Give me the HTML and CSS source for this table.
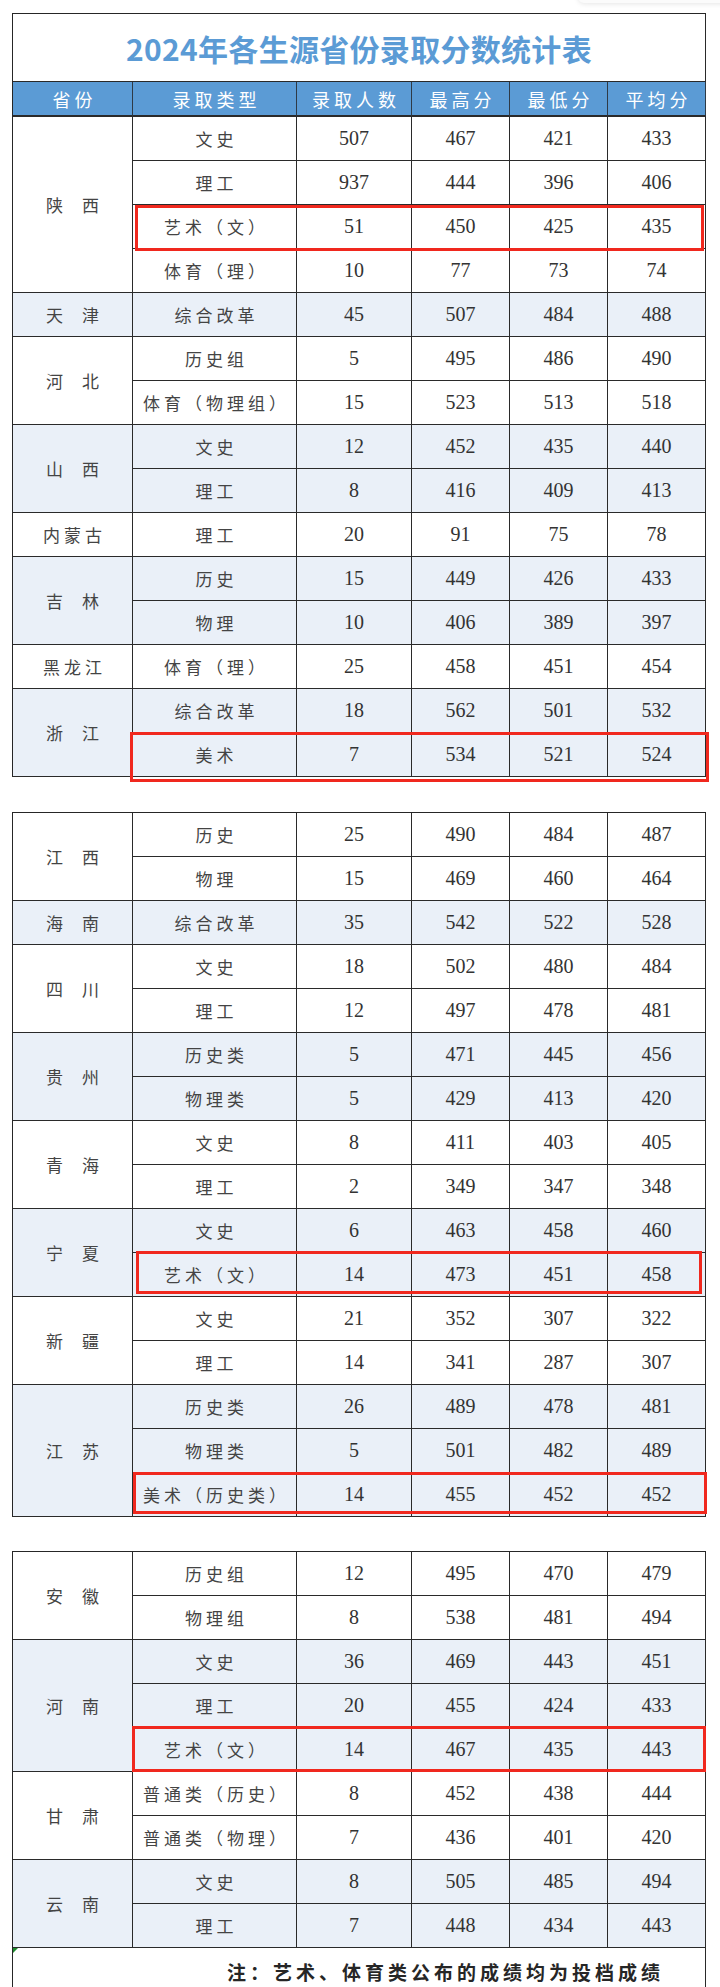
FILE: index.html
```html
<!DOCTYPE html>
<html lang="zh-CN">
<head>
<meta charset="utf-8">
<title>2024年各生源省份录取分数统计表</title>
<link rel="stylesheet" href="styles.css">
</head>
<body>
<div class="shade"></div>
<div class="page">
  <div class="sheet sheet-one">
    <div class="c title">2024年各生源省份录取分数统计表</div>
    <div class="c h">省份</div><div class="c h">录取类型</div><div class="c h">录取人数</div><div class="c h">最高分</div><div class="c h">最低分</div><div class="c h">平均分</div>

    <div class="c p s4">陕西</div>
    <div class="c t">文史</div><div class="c n">507</div><div class="c n">467</div><div class="c n">421</div><div class="c n">433</div>
    <div class="c t">理工</div><div class="c n">937</div><div class="c n">444</div><div class="c n">396</div><div class="c n">406</div>
    <div class="c t">艺术（文）</div><div class="c n">51</div><div class="c n">450</div><div class="c n">425</div><div class="c n">435</div>
    <div class="c t">体育（理）</div><div class="c n">10</div><div class="c n">77</div><div class="c n">73</div><div class="c n">74</div>

    <div class="c p b">天津</div>
    <div class="c t b">综合改革</div><div class="c n b">45</div><div class="c n b">507</div><div class="c n b">484</div><div class="c n b">488</div>

    <div class="c p s2">河北</div>
    <div class="c t">历史组</div><div class="c n">5</div><div class="c n">495</div><div class="c n">486</div><div class="c n">490</div>
    <div class="c t">体育（物理组）</div><div class="c n">15</div><div class="c n">523</div><div class="c n">513</div><div class="c n">518</div>

    <div class="c p s2 b">山西</div>
    <div class="c t b">文史</div><div class="c n b">12</div><div class="c n b">452</div><div class="c n b">435</div><div class="c n b">440</div>
    <div class="c t b">理工</div><div class="c n b">8</div><div class="c n b">416</div><div class="c n b">409</div><div class="c n b">413</div>

    <div class="c p3">内蒙古</div>
    <div class="c t">理工</div><div class="c n">20</div><div class="c n">91</div><div class="c n">75</div><div class="c n">78</div>

    <div class="c p s2 b">吉林</div>
    <div class="c t b">历史</div><div class="c n b">15</div><div class="c n b">449</div><div class="c n b">426</div><div class="c n b">433</div>
    <div class="c t b">物理</div><div class="c n b">10</div><div class="c n b">406</div><div class="c n b">389</div><div class="c n b">397</div>

    <div class="c p3">黑龙江</div>
    <div class="c t">体育（理）</div><div class="c n">25</div><div class="c n">458</div><div class="c n">451</div><div class="c n">454</div>

    <div class="c p s2 b">浙江</div>
    <div class="c t b">综合改革</div><div class="c n b">18</div><div class="c n b">562</div><div class="c n b">501</div><div class="c n b">532</div>
    <div class="c t b">美术</div><div class="c n b">7</div><div class="c n b">534</div><div class="c n b">521</div><div class="c n b">524</div>

    <div class="mark mark-1"></div>
    <div class="mark mark-2"></div>
  </div>

  <div class="sheet sheet-two">
    <div class="c p s2">江西</div>
    <div class="c t">历史</div><div class="c n">25</div><div class="c n">490</div><div class="c n">484</div><div class="c n">487</div>
    <div class="c t">物理</div><div class="c n">15</div><div class="c n">469</div><div class="c n">460</div><div class="c n">464</div>

    <div class="c p b">海南</div>
    <div class="c t b">综合改革</div><div class="c n b">35</div><div class="c n b">542</div><div class="c n b">522</div><div class="c n b">528</div>

    <div class="c p s2">四川</div>
    <div class="c t">文史</div><div class="c n">18</div><div class="c n">502</div><div class="c n">480</div><div class="c n">484</div>
    <div class="c t">理工</div><div class="c n">12</div><div class="c n">497</div><div class="c n">478</div><div class="c n">481</div>

    <div class="c p s2 b">贵州</div>
    <div class="c t b">历史类</div><div class="c n b">5</div><div class="c n b">471</div><div class="c n b">445</div><div class="c n b">456</div>
    <div class="c t b">物理类</div><div class="c n b">5</div><div class="c n b">429</div><div class="c n b">413</div><div class="c n b">420</div>

    <div class="c p s2">青海</div>
    <div class="c t">文史</div><div class="c n">8</div><div class="c n">411</div><div class="c n">403</div><div class="c n">405</div>
    <div class="c t">理工</div><div class="c n">2</div><div class="c n">349</div><div class="c n">347</div><div class="c n">348</div>

    <div class="c p s2 b">宁夏</div>
    <div class="c t b">文史</div><div class="c n b">6</div><div class="c n b">463</div><div class="c n b">458</div><div class="c n b">460</div>
    <div class="c t b">艺术（文）</div><div class="c n b">14</div><div class="c n b">473</div><div class="c n b">451</div><div class="c n b">458</div>

    <div class="c p s2">新疆</div>
    <div class="c t">文史</div><div class="c n">21</div><div class="c n">352</div><div class="c n">307</div><div class="c n">322</div>
    <div class="c t">理工</div><div class="c n">14</div><div class="c n">341</div><div class="c n">287</div><div class="c n">307</div>

    <div class="c p s3 b">江苏</div>
    <div class="c t b">历史类</div><div class="c n b">26</div><div class="c n b">489</div><div class="c n b">478</div><div class="c n b">481</div>
    <div class="c t b">物理类</div><div class="c n b">5</div><div class="c n b">501</div><div class="c n b">482</div><div class="c n b">489</div>
    <div class="c t b">美术（历史类）</div><div class="c n b">14</div><div class="c n b">455</div><div class="c n b">452</div><div class="c n b">452</div>

    <div class="mark mark-3"></div>
    <div class="mark mark-4"></div>
  </div>

  <div class="sheet sheet-three">
    <div class="c p s2">安徽</div>
    <div class="c t">历史组</div><div class="c n">12</div><div class="c n">495</div><div class="c n">470</div><div class="c n">479</div>
    <div class="c t">物理组</div><div class="c n">8</div><div class="c n">538</div><div class="c n">481</div><div class="c n">494</div>

    <div class="c p s3 b">河南</div>
    <div class="c t b">文史</div><div class="c n b">36</div><div class="c n b">469</div><div class="c n b">443</div><div class="c n b">451</div>
    <div class="c t b">理工</div><div class="c n b">20</div><div class="c n b">455</div><div class="c n b">424</div><div class="c n b">433</div>
    <div class="c t b">艺术（文）</div><div class="c n b">14</div><div class="c n b">467</div><div class="c n b">435</div><div class="c n b">443</div>

    <div class="c p s2">甘肃</div>
    <div class="c t">普通类（历史）</div><div class="c n">8</div><div class="c n">452</div><div class="c n">438</div><div class="c n">444</div>
    <div class="c t">普通类（物理）</div><div class="c n">7</div><div class="c n">436</div><div class="c n">401</div><div class="c n">420</div>

    <div class="c p s2 b">云南</div>
    <div class="c t b">文史</div><div class="c n b">8</div><div class="c n b">505</div><div class="c n b">485</div><div class="c n b">494</div>
    <div class="c t b">理工</div><div class="c n b">7</div><div class="c n b">448</div><div class="c n b">434</div><div class="c n b">443</div>

    <div class="c note">注：艺术、体育类公布的成绩均为投档成绩</div>

    <div class="mark mark-5"></div>
  </div>
</div>
</body>
</html>
```

FILE: styles.css
```css
html, body {
  margin: 0;
  padding: 0;
  background: #ffffff;
}

body {
  position: relative;
  font-family: "Noto Sans CJK SC", sans-serif;
  color: #3a3a3a;
}

.shade {
  position: absolute;
  top: -9px;
  left: 578px;
  width: 170px;
  height: 12px;
  border-radius: 8px;
  background: #fbfbfb;
  box-shadow: 0 1px 5px rgba(0, 0, 0, 0.10);
}

.page {
  padding: 13px 0 0 12px;
}

.sheet {
  position: relative;
  box-sizing: border-box;
  width: 694px;
  display: grid;
  grid-template-columns: 120px 164px 115px 98px 98px 98px;
  grid-auto-rows: 44px;
  border-left: 1px solid #262626;
  border-top: 1px solid #262626;
}

.sheet-one {
  grid-template-rows: 68px 35px;
}

.sheet-two {
  margin-top: 35px;
}

.sheet-three {
  margin-top: 34px;
  grid-template-rows: repeat(9, 44px) 46px;
}

.c {
  box-sizing: border-box;
  border-right: 1px solid #2a2a2a;
  border-bottom: 1px solid #2a2a2a;
  display: flex;
  align-items: center;
  justify-content: center;
  background: #ffffff;
  white-space: nowrap;
}

.b {
  background: #eaf0f8;
}

.title {
  grid-column: 1 / -1;
  font-size: 30px;
  font-weight: 700;
  color: #5b9bd5;
  letter-spacing: 0.3px;
  padding-top: 1px;
}

.h {
  background: #5b9bd5;
  color: #ffffff;
  font-size: 18px;
  letter-spacing: 4px;
  padding-left: 4px;
  border-bottom: 2px solid #2a2a2a;
  border-right-color: #2e3a46;
}

.p {
  font-size: 17px;
  letter-spacing: 19px;
  padding-left: 19px;
  color: #444444;
}

.p3 {
  font-size: 17px;
  letter-spacing: 4px;
  padding-left: 4px;
  color: #444444;
}

.s2 { grid-row: span 2; }
.s3 { grid-row: span 3; }
.s4 { grid-row: span 4; }

.t {
  font-size: 17px;
  letter-spacing: 4px;
  padding-left: 4px;
  color: #444444;
}

.n {
  font-family: "Liberation Serif", serif;
  font-size: 20px;
  color: #333333;
}

.note {
  position: relative;
  grid-column: 1 / -1;
  justify-content: flex-start;
  padding-left: 214px;
  font-size: 19px;
  font-weight: 700;
  letter-spacing: 4px;
  color: #262626;
  border-bottom: none;
}

.note::before {
  content: "";
  position: absolute;
  top: 0;
  left: 0;
  border-top: 5px solid #1e8a2e;
  border-right: 5px solid transparent;
}

.mark {
  position: absolute;
  box-sizing: border-box;
  border: 3px solid #f0281e;
  pointer-events: none;
}

.mark-1 { left: 122px; top: 191px; width: 569px; height: 46px; }
.mark-2 { left: 117px; top: 718px; width: 579px; height: 50px; }
.mark-3 { left: 123px; top: 438px; width: 566px; height: 43px; }
.mark-4 { left: 120px; top: 659px; width: 574px; height: 42px; }
.mark-5 { left: 119px; top: 174px; width: 574px; height: 46px; }
```
